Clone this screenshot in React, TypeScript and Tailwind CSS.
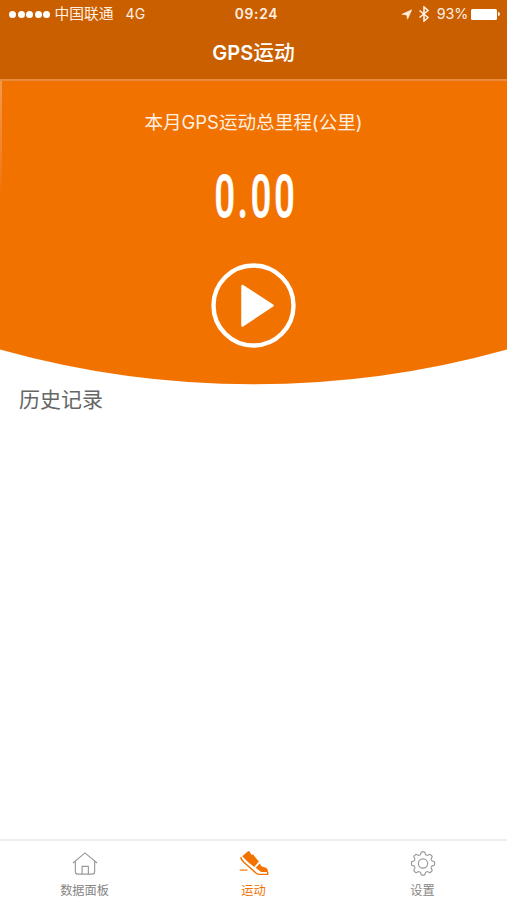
import type { ReactNode } from "react";

function StatusBar() {
  return (
    <div className="grid h-7 grid-cols-3 items-center text-[14px] leading-7 text-[#fff0e2]">
      <div className="flex items-center pl-[9px]">
        <div className="flex gap-[1.6px]">
          {[0, 1, 2, 3, 4].map((dot) => (
            <span key={dot} className="size-[7px] rounded-full bg-white" />
          ))}
        </div>
        <span className="ml-1 text-[14.8px] whitespace-nowrap">中国联通</span>
        <span className="ml-3 tracking-[0.2px]">4G</span>
      </div>
      <span className="pl-[6px] text-center text-[13.8px] font-semibold tracking-[0.7px]">09:24</span>
      <div className="flex items-center justify-end pr-[7px]">
        <svg className="mr-[6px] h-[11px] w-[11px]" viewBox="0 0 12 12" fill="currentColor">
          <path d="M11.8 .8 7.200 11.200 6.100 6.500 .8 5.800Z" stroke="currentColor" strokeWidth=".5" />
        </svg>
        <svg className="mr-[7px] h-4 w-[12px]" viewBox="0 0 12 16" fill="none" stroke="currentColor" strokeWidth="1.600">
          <path d="M1.500 4.500 10 11.500 6 15V1l4 3.500-8.500 7" />
        </svg>
        <span className="mr-[3px] text-[14.3px] tracking-[-0.2px]">93%</span>
        <span className="h-[11px] w-[26px] rounded-[1.5px] bg-white" />
        <span className="ml-px h-[4px] w-[2px] rounded-r-full bg-[#fff0e2]" />
      </div>
    </div>
  );
}

// 顶部橙色区域：本月里程 + 开始按钮
function Summary() {
  return (
    <section className="relative h-[304px] text-white">
      <svg className="absolute inset-0 h-full w-full" viewBox="0 0 507 304" preserveAspectRatio="none">
        <path d="M0 0H507V268.500A941 941 0 0 1 0 268.500Z" fill="#f27200" />
      </svg>
      <div className="absolute top-0 left-0 h-28 w-[2px] bg-linear-to-b from-[#f39a4d] to-[#f27200]" />
      <div className="relative flex flex-col items-center">
        <p className="mt-[27px] h-7 text-[18.6px] leading-7 whitespace-nowrap text-[#fff0e0]">
          本月<span className="text-[18.4px]">GPS</span>运动总里程(公里)
        </p>
        <p className="mt-[29px] h-[64px] scale-x-[0.6] pl-[7px] font-[Roboto] text-[60px] leading-[64px] font-medium tracking-[5px] [-webkit-text-stroke:0.8px_white]">
          0.00
        </p>
        <button className="mt-[34px] size-[85px]" aria-label="开始运动">
          <svg viewBox="0 0 85 85" fill="none">
            <circle cx="42.500" cy="42.500" r="40" stroke="white" strokeWidth="4.400" />
            <path d="M31.500 23 61.500 42.500 31.500 62.500Z" fill="white" stroke="white" strokeWidth="2.500" strokeLinejoin="round" />
          </svg>
        </button>
      </div>
    </section>
  );
}

function HomeIcon() {
  return (
    <svg className="h-[28px] w-[30px]" viewBox="0 0 30 28" fill="none" stroke="#999" strokeWidth="1.200">
      <path d="M2.500 13.500 15 3l12.500 10.500M5 11.500v11q0 2.500 2.500 2.500h15q2.500 0 2.500-2.500v-11M12 25V17h6.500v8" />
    </svg>
  );
}

function ShoeIcon() {
  return (
    <svg className="h-[28px] w-[30px]" viewBox="0 0 30 28" fill="#f27200">
      <path d="M2.800 6.500 8.500 1.500Q9.700 .5 10.500 1.800L12.300 5Q14.800 4 15.500 6.500L20 12 15.300 17.500Q8 12.500 2.800 6.500Z" />
      <path d="M21 14Q22 16.500 24 17.300L27.500 18.500Q30 20 29.300 22.700H22.500L16.700 18.500Z" />
      <path d="M1.200 7.300Q1.700 9.800 4.200 12.500L17 23.800Q18.800 25.300 21 25.300H29.200V22.500" fill="none" stroke="#f27200" strokeWidth="1.500" />
      <path d="M.200 20.800h8" stroke="#f27200" strokeWidth="1.200" />
    </svg>
  );
}

function GearIcon() {
  const teeth = [0, 45, 90, 135, 180, 225, 270, 315];
  return (
    <svg className="h-[28px] w-[30px]" viewBox="-15 -14 30 28" fill="none" stroke="#999" strokeWidth="1.200">
      {teeth.map((angle) => (
        <path
          key={angle}
          transform={`rotate(${angle})`}
          d="M-3.600-8.700Q-2.300-8.900-2.200-10.500Q-2.100-12-1-12H1Q2.100-12 2.200-10.500Q2.300-8.900 3.600-8.700"
        />
      ))}
      <circle r="4.800" />
    </svg>
  );
}

function Tab({ icon, label, active = false }: { icon: ReactNode; label: string; active?: boolean }) {
  return (
    <button className={`flex flex-1 flex-col items-center justify-start pt-[8px] ${active ? "text-[#f27200]" : "text-[#858585]"}`}>
      {icon}
      <span className="mt-[5px] text-[12.2px] leading-[18px]">{label}</span>
    </button>
  );
}

export default function App() {
  return (
    <div className="flex h-[900px] w-[507px] flex-col overflow-hidden bg-white font-['Inter','Noto_Sans_CJK_SC',sans-serif]">
      <header className="h-[81px] border-b-2 border-[#e98a3e] bg-[#ca5f00]">
        <StatusBar />
        <h1 className="mt-[11px] text-center text-[20.8px] leading-7 font-medium text-white">
          <span className="text-[20px] font-semibold">GPS</span>运动
        </h1>
      </header>
      <Summary />
      <main className="flex-1 pl-[19px]">
        <h2 className="text-[21px] leading-[30px] text-[#666]">历史记录</h2>
      </main>
      <nav className="flex h-[61px] border-t-2 border-[#eee] pt-px">
        <Tab icon={<HomeIcon />} label="数据面板" />
        <Tab icon={<ShoeIcon />} label="运动" active />
        <Tab icon={<GearIcon />} label="设置" />
      </nav>
    </div>
  );
}
